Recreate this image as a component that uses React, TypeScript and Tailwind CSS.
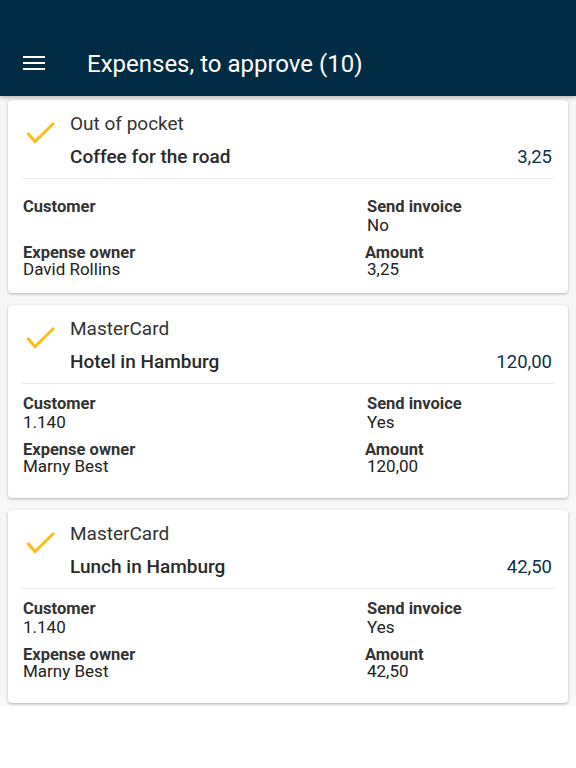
import React from "react"

type Expense = {
  method: string
  title: string
  amount: string
  customer: string
  sendInvoice: string
  owner: string
}

const expenses: Expense[] = [
  { method: "Out of pocket", title: "Coffee for the road", amount: "3,25", customer: "", sendInvoice: "No", owner: "David Rollins" },
  { method: "MasterCard", title: "Hotel in Hamburg", amount: "120,00", customer: "1.140", sendInvoice: "Yes", owner: "Marny Best" },
  { method: "MasterCard", title: "Lunch in Hamburg", amount: "42,50", customer: "1.140", sendInvoice: "Yes", owner: "Marny Best" },
]

function Check() {
  return (
    <svg width="34" height="24" viewBox="0 0 34 24" className="shrink-0">
      <path d="M2.5 12 L10 20.5 L29 2" fill="none" stroke="#fbbc1c" strokeWidth="3" />
    </svg>
  )
}

function ExpenseCard({ e }: { e: Expense }) {
  const noCustomer = e.customer === ""
  return (
    <div className={`bg-white rounded-[4px] shadow-[0_1px_3px_rgba(0,0,0,0.28)] px-[14px] pt-[12px] ${noCustomer ? "pb-[16px]" : "pb-[24px]"}`}>
      {/* Header row with check mark */}
      <div className="flex">
        <div className="w-[48px] pt-[9px] pl-[3px]">
          <Check />
        </div>
        <div className="flex-1 pr-[2px]">
          <p className="text-[19px] leading-[24px] text-[#333]">{e.method}</p>
          <div className="flex justify-between mt-[9px]">
            <p className="text-[19px] leading-[24px] font-medium text-[#2a2a2a]">{e.title}</p>
            <p className="text-[18.5px] leading-[24px] text-[#0c3149]">{e.amount}</p>
          </div>
        </div>
      </div>
      <div className={`border-t border-[#e8e8e8] mt-[9px] ${noCustomer ? "mb-[18px]" : "mb-[10px]"}`} />

      {/* Details */}
      <div className="grid grid-cols-[344px_1fr] text-[17px] text-[#222] px-[1px]">
        <div>
          <p className="text-[16.5px] font-bold leading-[19px] text-[#333]">Customer</p>
          <p className="leading-[19px] h-[19px]">{e.customer}</p>
        </div>
        <div>
          <p className="text-[16.5px] font-bold leading-[19px] text-[#333]">Send invoice</p>
          <p className="leading-[19px]">{e.sendInvoice}</p>
        </div>
        <div className="mt-[10px]">
          <p className="text-[16.5px] font-bold leading-[16px] text-[#333]">Expense owner</p>
          <p className="leading-[16px]">{e.owner}</p>
        </div>
        <div className="mt-[10px] -ml-[2px]">
          <p className="text-[16.5px] font-bold leading-[16px] text-[#333]">Amount</p>
          <p className="leading-[16px] pl-[2px]">{e.amount}</p>
        </div>
      </div>
    </div>
  )
}

export default function App() {
  return (
    <div className="min-h-[768px] bg-white font-['Roboto',sans-serif]">
      {/* App bar */}
      <header className="h-[96px] bg-[#022c43] flex items-end pb-[18px] shadow-[0_2px_4px_rgba(0,0,0,0.25)] relative z-10">
        <div className="w-[87px] pl-[23px] flex flex-col gap-[4px] mb-[8px]">
          <span className="block w-[22px] h-[2px] bg-white" />
          <span className="block w-[22px] h-[2px] bg-white" />
          <span className="block w-[22px] h-[2px] bg-white" />
        </div>
        <h1 className="text-white text-[24px] leading-[28px]">Expenses, to approve (10)</h1>
      </header>

      {/* Expense list */}
      <div className="bg-[#f7f7f7] px-[8px] pt-[4px] pb-[3px] flex flex-col gap-[12px]">
        {expenses.map((e, i) => (
          <ExpenseCard key={i} e={e} />
        ))}
      </div>
    </div>
  )
}
